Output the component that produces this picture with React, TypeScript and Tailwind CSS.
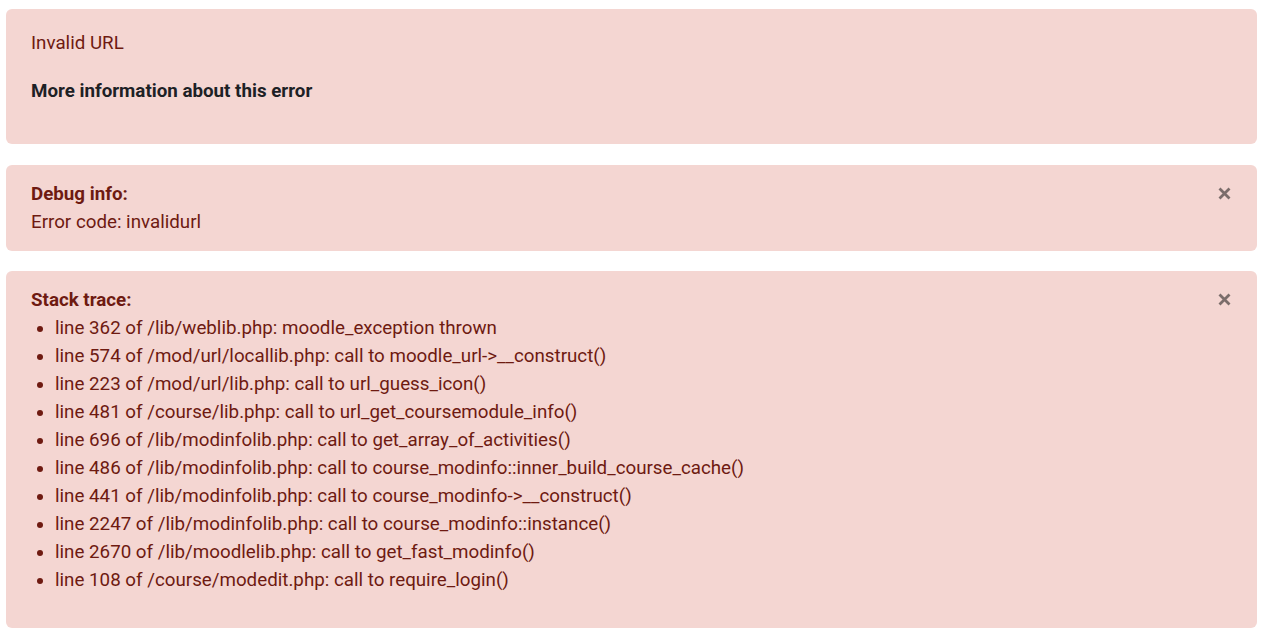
const trace = [
  "line 362 of /lib/weblib.php: moodle_exception thrown",
  "line 574 of /mod/url/locallib.php: call to moodle_url->__construct()",
  "line 223 of /mod/url/lib.php: call to url_guess_icon()",
  "line 481 of /course/lib.php: call to url_get_coursemodule_info()",
  "line 696 of /lib/modinfolib.php: call to get_array_of_activities()",
  "line 486 of /lib/modinfolib.php: call to course_modinfo::inner_build_course_cache()",
  "line 441 of /lib/modinfolib.php: call to course_modinfo->__construct()",
  "line 2247 of /lib/modinfolib.php: call to course_modinfo::instance()",
  "line 2670 of /lib/moodlelib.php: call to get_fast_modinfo()",
  "line 108 of /course/modedit.php: call to require_login()",
];

const CloseButton = () => (
  <button className="absolute right-[26px] top-[21px] w-[14px] h-[14px] flex items-center justify-center">
    <svg width="13" height="13" viewBox="0 0 13 13">
      <path d="M1.5 1.5 L11.5 11.5 M11.5 1.5 L1.5 11.5" stroke="#7b6d6b" strokeWidth="2.8" />
    </svg>
  </button>
);

export default function App() {
  return (
    <div className="min-h-screen bg-white pt-[9px] pl-[6px] pr-[7px] font-['Roboto',sans-serif] text-[18.75px] leading-[28px] text-[#6e1a11]">
      <div className="rounded-[6px] bg-[#f4d6d2] px-[25px] pt-[20px] pb-[39px]">
        <p>Invalid URL</p>
        <p className="mt-[20px] font-bold text-[#1d2125]">More information about this error</p>
      </div>

      <div className="relative mt-[21px] rounded-[6px] bg-[#f4d6d2] pl-[25px] pr-[60px] pt-[15px] pb-[15px]">
        <p className="font-bold">Debug info:</p>
        <p>Error code: invalidurl</p>
        <CloseButton />
      </div>

      <div className="relative mt-[20px] rounded-[6px] bg-[#f4d6d2] pl-[25px] pr-[60px] pt-[15px] pb-[34px]">
        <p className="font-bold">Stack trace:</p>
        <ul className="list-disc pl-[24px]">
          {trace.map((line) => (
            <li key={line}>{line}</li>
          ))}
        </ul>
        <CloseButton />
      </div>
    </div>
  );
}
